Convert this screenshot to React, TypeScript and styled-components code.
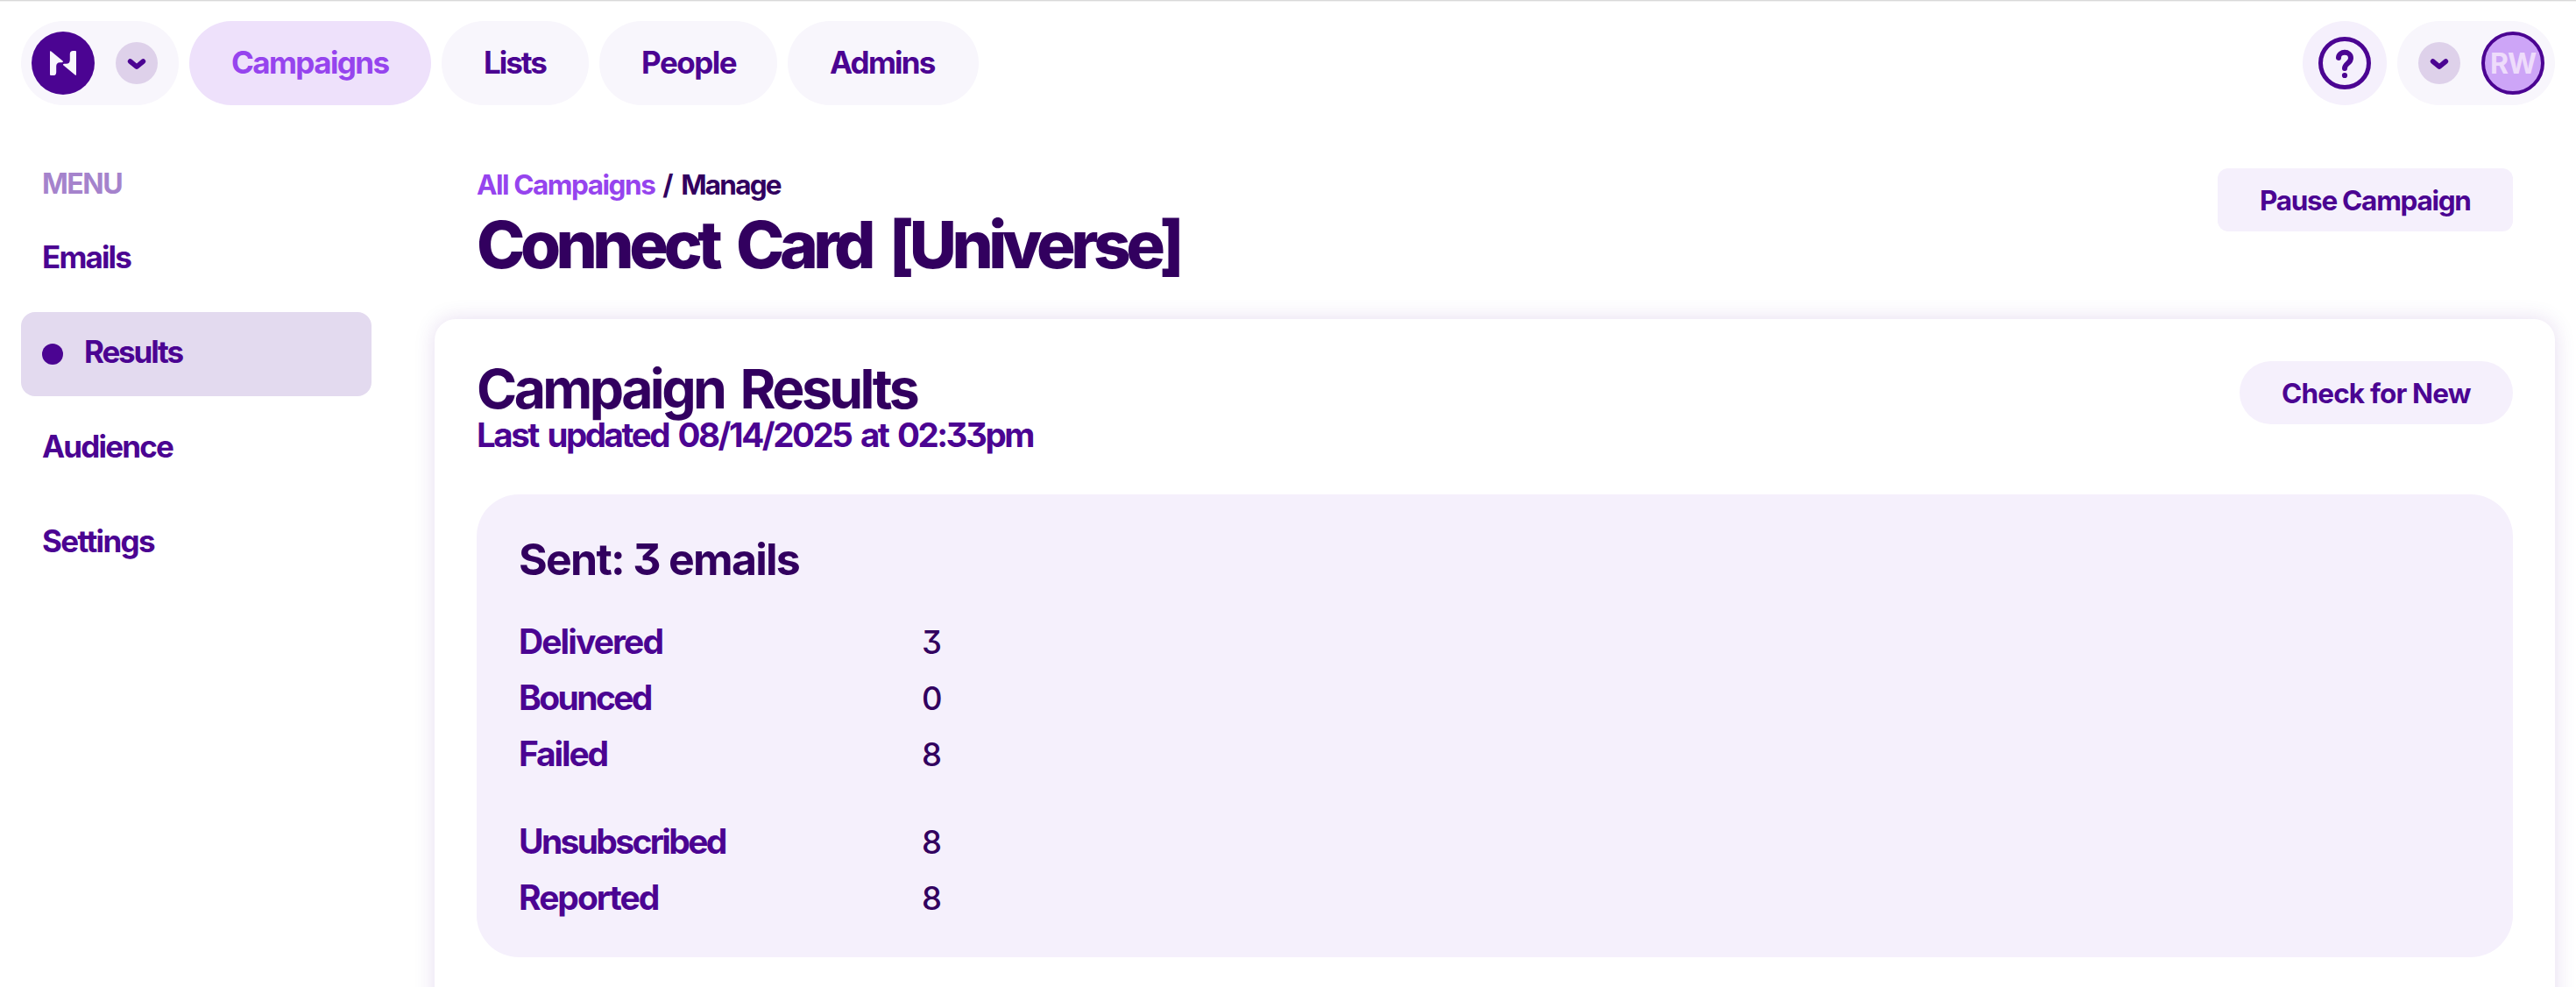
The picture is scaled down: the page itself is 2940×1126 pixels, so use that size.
import React from "react";
import styled, { createGlobalStyle } from "styled-components";

const colors = {
  deep: "#32005f",
  brand: "#4b0492",
  accent: "#9644ee",
  muted: "#a583cc",
  pill: "#f8f6fc",
  pillActive: "#eee1fb",
  panel: "#f5f0fc",
  chip: "#ded1ea",
  selected: "#e3daef",
};

const GlobalStyle = createGlobalStyle`
  *, *::before, *::after { box-sizing: border-box; }
  body {
    margin: 0;
    background: #fff;
    color: ${colors.deep};
    font-family: Inter, "Liberation Sans", sans-serif;
    font-feature-settings: "cv09";
    overflow: hidden;
  }
  h1, h2, h3, p, dl, dt, dd { margin: 0; }
  a { color: inherit; text-decoration: none; }
  button { border: 0; font: inherit; color: inherit; }
`;

const Page = styled.div`
  height: 1126px;
  overflow: hidden;
  border-top: 1px solid #d9d9d9;
  box-shadow: inset 0 1px 0 #f2f2f2;
`;

const Header = styled.header`
  display: flex;
  justify-content: space-between;
  padding: 23px 24px 0;
`;

const Nav = styled.nav`
  display: flex;
  gap: 12px;
`;

const SwitcherPill = styled.div`
  display: flex;
  align-items: center;
  justify-content: space-between;
  width: 180px;
  height: 96px;
  padding: 0 24px 0 12px;
  border-radius: 48px;
  background: ${colors.pill};
`;

const AccountPill = styled(SwitcherPill)`
  padding: 0 12px 0 24px;
`;

const LogoMark = styled.span`
  display: grid;
  place-items: center;
  width: 72px;
  height: 72px;
  border-radius: 50%;
  background: ${colors.brand};
`;

const Chip = styled.button`
  display: grid;
  place-items: center;
  width: 48px;
  height: 48px;
  padding: 2px 0 0;
  border-radius: 50%;
  background: ${colors.chip};
`;

const NavLink = styled.a<{ $width: number; $spacing: number; $active?: boolean }>`
  width: ${(p) => p.$width}px;
  height: 96px;
  padding-left: 48px;
  border-radius: 48px;
  background: ${(p) => (p.$active ? colors.pillActive : colors.pill)};
  color: ${(p) => (p.$active ? colors.accent : colors.brand)};
  font-size: 35px;
  font-weight: 700;
  line-height: 95px;
  letter-spacing: ${(p) => p.$spacing}px;
  white-space: nowrap;
`;

const HelpButton = styled.button`
  display: grid;
  place-items: center;
  width: 96px;
  height: 96px;
  padding: 0;
  border-radius: 50%;
  background: ${colors.panel};
`;

const Avatar = styled.span`
  display: flex;
  justify-content: center;
  width: 72px;
  height: 72px;
  border: 4px solid ${colors.brand};
  border-radius: 50%;
  background: #cda5f7;
  color: #eedcfb;
  font-size: 32px;
  font-weight: 650;
  line-height: 65px;
  letter-spacing: -1px;
`;

const Body = styled.div`
  display: grid;
  grid-template-columns: 400px 1fr;
  column-gap: 72px;
  padding: 0 24px;
`;

const Sidebar = styled.aside`
  display: flex;
  flex-direction: column;
  gap: 12px;
  padding-top: 69px;
`;

const MenuTitle = styled.div`
  height: 47px;
  padding-left: 24px;
  color: ${colors.muted};
  font-size: 32px;
  font-weight: 680;
  line-height: 41px;
  letter-spacing: -1.5px;
`;

const MenuItem = styled.a<{ $spacing: number; $selected?: boolean }>`
  display: flex;
  align-items: center;
  gap: 24px;
  height: 96px;
  padding-left: 24px;
  border-radius: 16px;
  background: ${(p) => (p.$selected ? colors.selected : "transparent")};
  color: ${colors.brand};
  font-size: 35px;
  font-weight: 700;
  letter-spacing: ${(p) => p.$spacing}px;
`;

const MenuLabel = styled.span`
  padding-bottom: 6px;
`;

const Dot = styled.span`
  width: 24px;
  height: 24px;
  border-radius: 50%;
  background: ${colors.brand};
`;

const TitleBar = styled.div`
  display: flex;
  justify-content: space-between;
  height: 244px;
  padding: 71px 48px 0;
`;

const Breadcrumb = styled.nav`
  display: flex;
  gap: 8px;
  font-size: 31.5px;
  font-weight: 650;
  line-height: 40px;
`;

const Crumb = styled.span<{ $spacing: number; $link?: boolean }>`
  color: ${(p) => (p.$link ? colors.accent : colors.deep)};
  letter-spacing: ${(p) => p.$spacing}px;
`;

const CrumbSlash = styled.span`
  width: 14px;
  text-align: center;
`;

const Title = styled.h1`
  margin-top: 8px;
  font-size: 74.5px;
  font-weight: 760;
  line-height: 80px;
  letter-spacing: -5.5px;
  word-spacing: 10px;
  white-space: nowrap;
`;

const ActionButton = styled.button<{ $width: number; $spacing: number; $round?: boolean }>`
  width: ${(p) => p.$width}px;
  height: 72px;
  margin-top: ${(p) => (p.$round ? 0 : 1)}px;
  padding: 1px 0 0 48px;
  border-radius: ${(p) => (p.$round ? 36 : 12)}px;
  background: ${colors.panel};
  color: ${colors.brand};
  font-size: 31.5px;
  font-weight: 650;
  line-height: 72px;
  letter-spacing: ${(p) => p.$spacing}px;
  text-align: left;
  white-space: nowrap;
`;

const Card = styled.section`
  height: 900px;
  padding: 48px;
  border-radius: 24px;
  background: #fff;
  box-shadow: 0 0 24px rgba(75, 4, 146, 0.14);
`;

const CardHeader = styled.div`
  display: flex;
  justify-content: space-between;
  height: 152px;
`;

const CardTitle = styled.h2`
  font-size: 62.5px;
  font-weight: 650;
  line-height: 63px;
  letter-spacing: -3.6px;
  word-spacing: 7px;
`;

const Updated = styled.p`
  color: ${colors.brand};
  font-size: 38.5px;
  font-weight: 650;
  line-height: 42px;
  letter-spacing: -2.46px;
  word-spacing: 3.8px;
`;

const Stats = styled.div`
  height: 528px;
  padding: 44px 48px 36px;
  border-radius: 48px;
  background: ${colors.panel};
`;

const StatsTitle = styled.h3`
  margin-bottom: 32px;
  font-size: 50px;
  font-weight: 650;
  line-height: 60px;
  letter-spacing: -1.72px;
`;

const StatGroup = styled.dl`
  & + & { margin-top: 36px; }
`;

const StatRow = styled.div`
  display: grid;
  grid-template-columns: 460px 1fr;
  height: 64px;
  line-height: 64px;
`;

const StatLabel = styled.dt<{ $spacing: number }>`
  color: ${colors.brand};
  font-size: 39px;
  font-weight: 700;
  letter-spacing: ${(p) => p.$spacing}px;
`;

const StatValue = styled.dd`
  padding-top: 1px;
  font-size: 36.5px;
  font-weight: 450;
`;

const Chevron = () => (
  <svg width="22" height="14" viewBox="0 0 22 14" fill="none" stroke={colors.brand} strokeWidth="5.6" strokeLinecap="round" strokeLinejoin="round">
    <path d="M3.6 4 L11 10.2 L18.4 4" />
  </svg>
);

const Logo = () => (
  <svg width="30" height="28" viewBox="0 0 30 28" fill={colors.pill}>
    <path d="M0 1 Q0 -0.4 1.3 0.5 L14.6 11.4 Q15.8 12.9 13.6 13.3 H11.5 Q7.2 13.5 7.2 17.6 V24.4 Q7.2 28 3.6 28 H1 Q0 28 0 27 Z" />
    <path d="M30 27 Q30 28.4 28.7 27.5 L15.4 16.6 Q14.2 15.1 16.4 14.7 H18.5 Q22.8 14.5 22.8 10.4 V3.6 Q22.8 0 26.4 0 H29 Q30 0 30 1 Z" />
  </svg>
);

const HelpIcon = () => (
  <svg width="60" height="60" viewBox="0 0 60 60" fill="none" stroke={colors.brand} strokeLinecap="round">
    <circle cx="30" cy="30" r="27.5" strokeWidth="5" />
    <path d="M23 23.9 C23.2 15.8 37 15.8 37 24.2 C37 30.4 30 30 30 36" strokeWidth="6" />
    <circle cx="30" cy="44" r="3.1" fill={colors.brand} stroke="none" />
  </svg>
);

const navLinks = [
  { label: "Campaigns", width: 276, spacing: -1.6, active: true },
  { label: "Lists", width: 168, spacing: -2.05 },
  { label: "People", width: 203, spacing: -1.5 },
  { label: "Admins", width: 218, spacing: -1.75 },
];

const menu = [
  { label: "Emails", spacing: -1.85 },
  { label: "Results", spacing: -2.15, selected: true },
  { label: "Audience", spacing: -1.8 },
  { label: "Settings", spacing: -1.65 },
];

const statGroups = [
  [
    { label: "Delivered", value: 3, spacing: -1.9 },
    { label: "Bounced", value: 0, spacing: -2.6 },
    { label: "Failed", value: 8, spacing: -2.15 },
  ],
  [
    { label: "Unsubscribed", value: 8, spacing: -2.65 },
    { label: "Reported", value: 8, spacing: -2 },
  ],
];

export default function App() {
  return (
    <>
      <GlobalStyle />
      <Page>
        <Header>
          <Nav>
            <SwitcherPill>
              <LogoMark><Logo /></LogoMark>
              <Chip aria-label="Switch workspace"><Chevron /></Chip>
            </SwitcherPill>
            {navLinks.map((l) => (
              <NavLink key={l.label} $width={l.width} $spacing={l.spacing} $active={l.active}>
                {l.label}
              </NavLink>
            ))}
          </Nav>
          <Nav>
            <HelpButton aria-label="Help"><HelpIcon /></HelpButton>
            <AccountPill>
              <Chip aria-label="Account menu"><Chevron /></Chip>
              <Avatar>RW</Avatar>
            </AccountPill>
          </Nav>
        </Header>
        <Body>
          <Sidebar>
            <MenuTitle>MENU</MenuTitle>
            {menu.map((m) => (
              <MenuItem key={m.label} $spacing={m.spacing} $selected={m.selected}>
                {m.selected && <Dot />}
                <MenuLabel>{m.label}</MenuLabel>
              </MenuItem>
            ))}
          </Sidebar>
          <main>
            <TitleBar>
              <div>
                <Breadcrumb>
                  <Crumb $spacing={-1.48} $link>All Campaigns</Crumb>
                  <CrumbSlash>/</CrumbSlash>
                  <Crumb $spacing={-1.8}>Manage</Crumb>
                </Breadcrumb>
                <Title>Connect Card [Universe]</Title>
              </div>
              <ActionButton $width={337} $spacing={-1.28}>Pause Campaign</ActionButton>
            </TitleBar>
            <Card>
              <CardHeader>
                <div>
                  <CardTitle>Campaign Results</CardTitle>
                  <Updated>Last updated 08/14/2025 at 02:33pm</Updated>
                </div>
                <ActionButton $width={312} $spacing={-0.84} $round>Check for New</ActionButton>
              </CardHeader>
              <Stats>
                <StatsTitle>Sent: 3 emails</StatsTitle>
                {statGroups.map((group, i) => (
                  <StatGroup key={i}>
                    {group.map((s) => (
                      <StatRow key={s.label}>
                        <StatLabel $spacing={s.spacing}>{s.label}</StatLabel>
                        <StatValue>{s.value}</StatValue>
                      </StatRow>
                    ))}
                  </StatGroup>
                ))}
              </Stats>
            </Card>
          </main>
        </Body>
      </Page>
    </>
  );
}
